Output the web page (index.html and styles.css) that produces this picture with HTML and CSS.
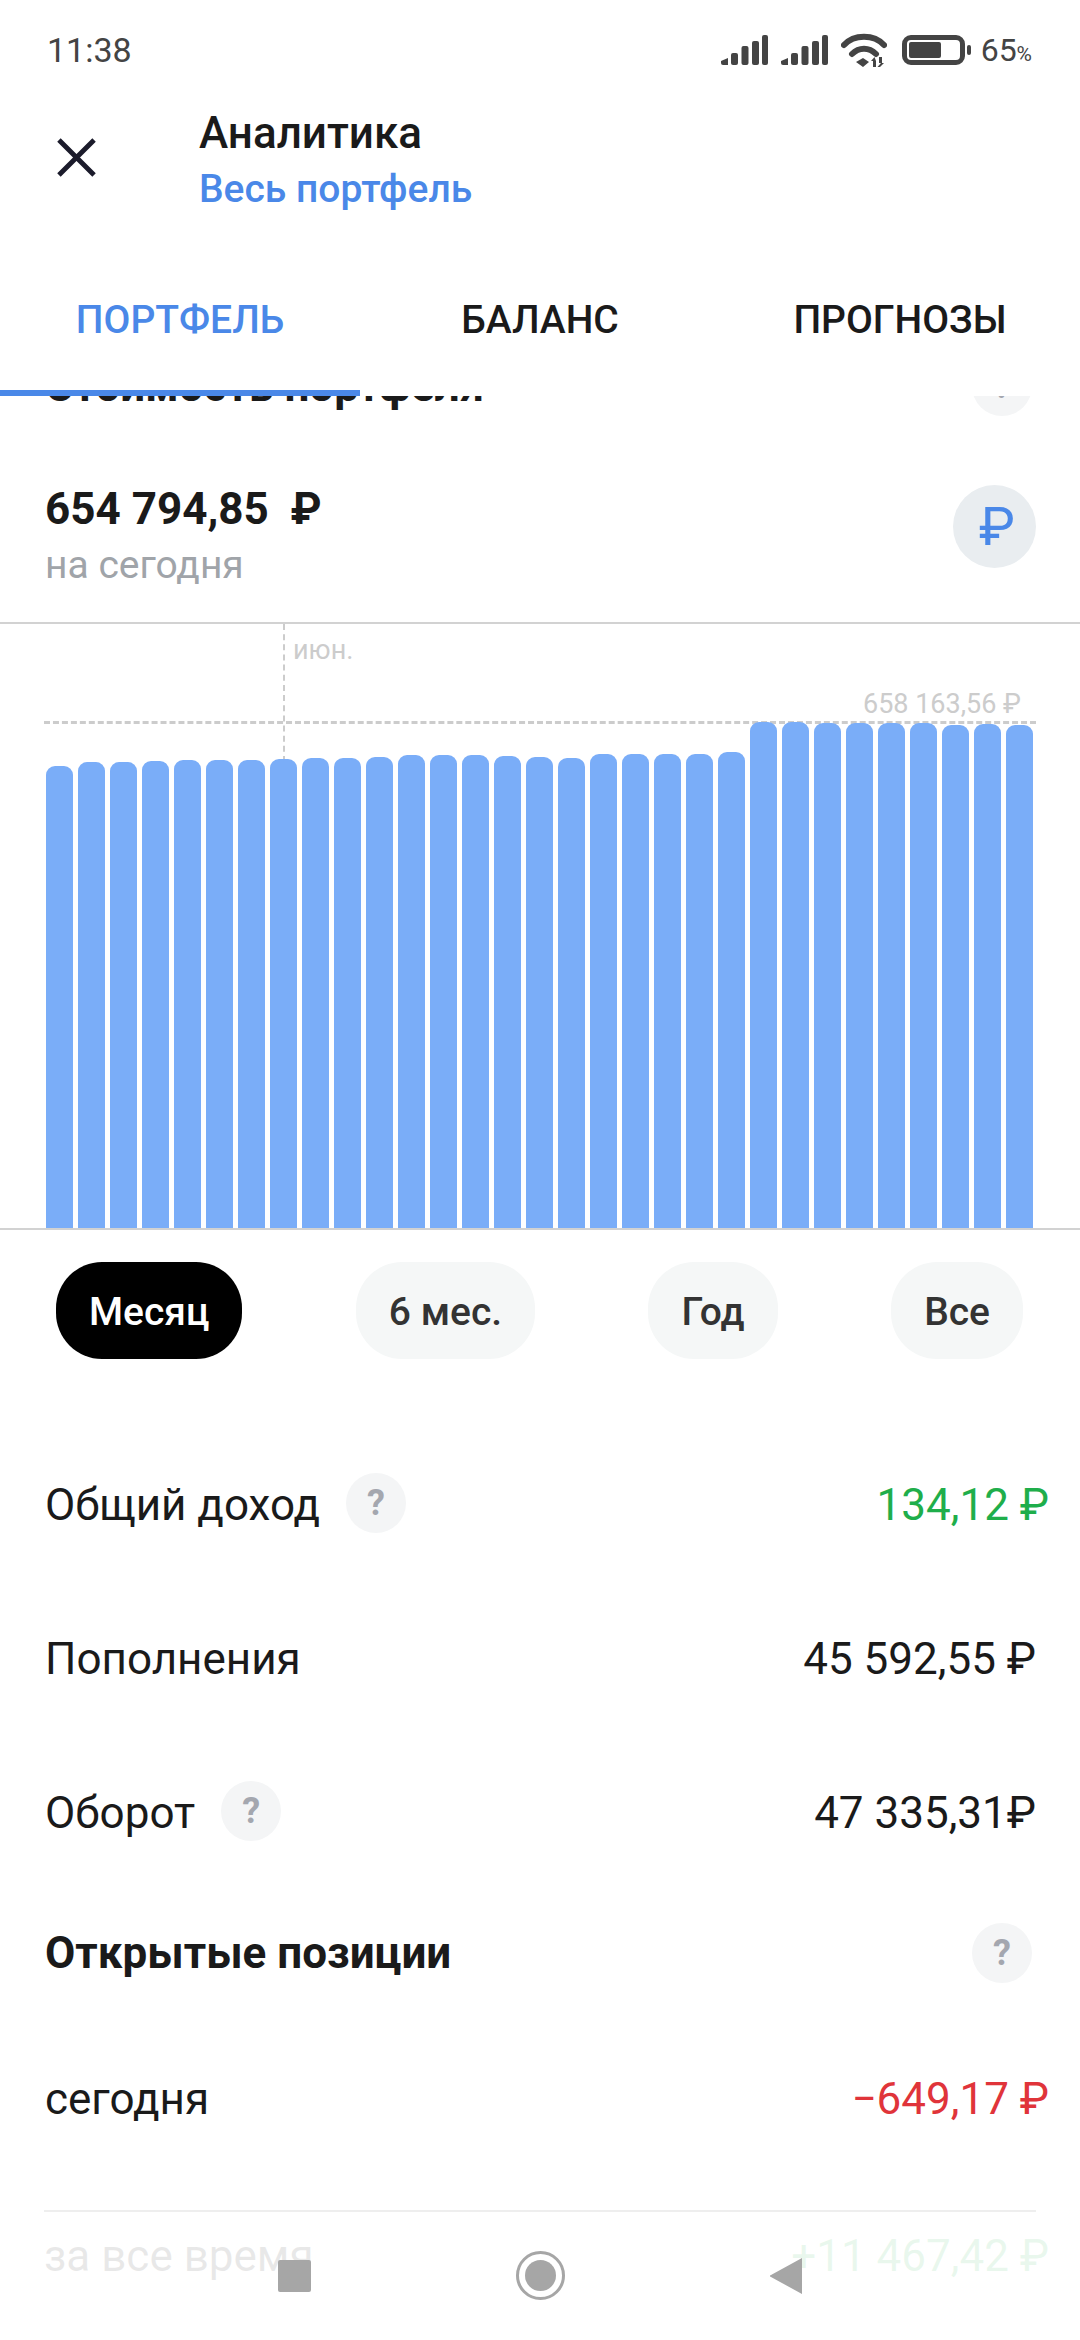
FILE: index.html
```html
<!DOCTYPE html>
<html lang="ru">
<head>
  <meta charset="UTF-8" />
  <meta name="viewport" content="width=device-width, initial-scale=1.0" />
  <title>Аналитика</title>
  <link rel="stylesheet" href="styles.css">
</head>
<body>
  <div class="screen">
    <div class="status">
      <span class="time">11:38</span>
      <div class="status-icons">
        <svg class="signal" viewBox="0 0 47 30" fill="#444"><path d="M0 26l7-3v7H2a2 2 0 0 1-2-2z"/><rect x="10" y="18" width="7" height="12" rx="2"/><rect x="20.500" y="11" width="7" height="19" rx="2"/><rect x="31" y="6" width="7" height="24" rx="2"/><rect x="41" y="0" width="6" height="30" rx="2"/></svg>
        <svg class="signal second" viewBox="0 0 47 30" fill="#444"><path d="M0 26l7-3v7H2a2 2 0 0 1-2-2z"/><rect x="10" y="18" width="7" height="12" rx="2"/><rect x="20.500" y="11" width="7" height="19" rx="2"/><rect x="31" y="6" width="7" height="24" rx="2"/><rect x="41" y="0" width="6" height="30" rx="2"/></svg>
        <svg class="wifi" viewBox="0 0 46 34"><path d="M3 12C13 1 33 1 43 12M11 21c7-7 17-7 24 0" fill="none" stroke="#444" stroke-width="6" stroke-linecap="round"/><path d="M15 29l7-4 6 4-6 5zM32 34v-6h-2l3.500-4 1.500 4v6zM38 24v6h2l-3.500 4h2.500l4-4h-2v-6z" fill="#444"/></svg>
        <div class="battery"><div class="battery-fill"></div></div>
        <div class="battery-nub"></div>
        <span class="percent">65<small>%</small></span>
      </div>
    </div>

    <header class="appbar">
      <svg class="close" viewBox="0 0 40 40"><path d="M2 2l36 36M38 2L2 38" stroke="#1b1b2b" stroke-width="5" fill="none"/></svg>
      <div>
        <h1>Аналитика</h1>
        <p class="sub">Весь портфель</p>
      </div>
    </header>

    <nav class="tabs">
      <div class="tab active">ПОРТФЕЛЬ</div>
      <div class="tab">БАЛАНС</div>
      <div class="tab">ПРОГНОЗЫ</div>
    </nav>

    <main class="content">
      <div class="row-head clipped">
        <h2>Стоимость портфеля</h2>
        <span class="hint">?</span>
      </div>

      <section class="total">
        <div>
          <div class="total-value">654 794,85&nbsp; ₽</div>
          <div class="total-date">на сегодня</div>
        </div>
        <div class="currency">₽</div>
      </section>

      <section class="chart">
        <div class="month-line"></div>
        <span class="month">июн.</span>
        <div class="max-line"></div>
        <span class="max">658 163,56 ₽</span>
        <div class="bars">
          <div class="bar" style="height:462px"></div>
          <div class="bar" style="height:466px"></div>
          <div class="bar" style="height:466px"></div>
          <div class="bar" style="height:467px"></div>
          <div class="bar" style="height:468px"></div>
          <div class="bar" style="height:468px"></div>
          <div class="bar" style="height:468px"></div>
          <div class="bar" style="height:469px"></div>
          <div class="bar" style="height:470px"></div>
          <div class="bar" style="height:470px"></div>
          <div class="bar" style="height:471px"></div>
          <div class="bar" style="height:473px"></div>
          <div class="bar" style="height:473px"></div>
          <div class="bar" style="height:473px"></div>
          <div class="bar" style="height:472px"></div>
          <div class="bar" style="height:471px"></div>
          <div class="bar" style="height:470px"></div>
          <div class="bar" style="height:474px"></div>
          <div class="bar" style="height:474px"></div>
          <div class="bar" style="height:474px"></div>
          <div class="bar" style="height:474px"></div>
          <div class="bar" style="height:476px"></div>
          <div class="bar" style="height:506px"></div>
          <div class="bar" style="height:506px"></div>
          <div class="bar" style="height:505px"></div>
          <div class="bar" style="height:505px"></div>
          <div class="bar" style="height:505px"></div>
          <div class="bar" style="height:505px"></div>
          <div class="bar" style="height:503px"></div>
          <div class="bar" style="height:504px"></div>
          <div class="bar" style="height:503px"></div>
        </div>
      </section>

      <div class="periods">
        <button class="pill selected">Месяц</button>
        <button class="pill">6 мес.</button>
        <button class="pill">Год</button>
        <button class="pill">Все</button>
      </div>

      <div class="rows">
        <div class="row">
          <div class="row-label">Общий доход <span class="hint">?</span></div>
          <div class="amount green">134,12 ₽</div>
        </div>
        <div class="row">
          <div class="row-label">Пополнения</div>
          <div class="amount inset">45 592,55 ₽</div>
        </div>
        <div class="row">
          <div class="row-label">Оборот <span class="hint">?</span></div>
          <div class="amount inset">47 335,31₽</div>
        </div>
        <div class="row-head positions">
          <h2>Открытые позиции</h2>
          <span class="hint">?</span>
        </div>
        <div class="row">
          <div class="row-label">сегодня</div>
          <div class="amount red">−649,17 ₽</div>
        </div>
        <div class="row last">
          <div class="row-label">за все время</div>
          <div class="amount green">+11 467,42 ₽</div>
        </div>
      </div>
    </main>

    <div class="navbar">
      <div class="nav-square"></div>
      <div class="nav-home"><div class="nav-dot"></div></div>
      <svg class="nav-back" viewBox="0 0 32 36"><path d="M32 0v36L1 19a1 1 0 0 1 0-2z" fill="#a6a6a6"/></svg>
    </div>
  </div>
</body>
</html>
```
FILE: styles.css
```css
* {
  margin: 0;
  padding: 0;
  box-sizing: border-box;
}
body {
  background-color: #fff;
  font-family: Roboto, "Noto Sans", sans-serif;
  color: #1a1a1a;
}
.screen {
  position: relative;
  width: 1080px;
  height: 2340px;
  display: flex;
  flex-direction: column;
  overflow: hidden;
}

/* status bar */
.status {
  height: 100px;
  flex: none;
  display: flex;
  justify-content: space-between;
  align-items: center;
  padding: 0 48px 0 47px;
}
.time {
  font-size: 34px;
  color: #444;
}
.status-icons {
  display: flex;
  align-items: center;
}
.signal {
  width: 47px;
  height: 30px;
}
.signal.second {
  margin-left: 13px;
}
.wifi {
  width: 46px;
  height: 34px;
  margin-left: 13px;
}
.battery {
  width: 63px;
  height: 30px;
  margin-left: 15px;
  border: 5px solid #444;
  border-radius: 9px;
  padding: 2px;
}
.battery-fill {
  width: 32px;
  height: 16px;
  background-color: #444;
  border-radius: 2px;
}
.battery-nub {
  width: 4px;
  height: 10px;
  margin-left: 2px;
  background-color: #444;
  border-radius: 2px;
}
.percent {
  margin-left: 10px;
  font-size: 32px;
  color: #444;
}
.percent small {
  font-size: 21px;
}

/* header */
.appbar {
  height: 170px;
  flex: none;
  display: flex;
  align-items: flex-start;
  padding: 8px 0 0 57px;
}
.close {
  width: 39px;
  height: 39px;
  margin: 30px 103px 0 0;
}
h1 {
  font-size: 44px;
  font-weight: 500;
  line-height: 50px;
}
.sub {
  margin-top: 6px;
  font-size: 39px;
  font-weight: 500;
  line-height: 50px;
  color: #4a88e8;
}

.tabs {
  height: 126px;
  flex: none;
  display: flex;
  position: relative;
  z-index: 2;
  background-color: #fff;
}
.tab {
  width: 360px;
  padding-top: 29px;
  font-size: 39px;
  font-weight: 500;
  line-height: 42px;
  text-align: center;
}
.tab.active {
  color: #4a88e8;
  border-bottom: 6px solid #4a88e8;
}

/* scrolled content */
.content {
  flex: 1;
  min-height: 0;
  overflow: hidden;
}
.row-head {
  display: flex;
  justify-content: space-between;
  align-items: center;
  padding: 0 48px 0 45px;
}
.row-head .hint {
  margin: 0;
}
.clipped {
  height: 60px;
  margin-top: -40px;
}
h2 {
  font-size: 44px;
  font-weight: 700;
}
.hint {
  display: inline-flex;
  justify-content: center;
  align-items: center;
  width: 60px;
  height: 60px;
  margin: -4px 0 0 26px;
  border-radius: 50%;
  background-color: #f4f5f6;
  font-size: 36px;
  font-weight: 700;
  color: #a4a7af;
}
.total {
  height: 206px;
  display: flex;
  justify-content: space-between;
  align-items: flex-start;
  padding: 68px 44px 0 45px;
}
.total-value {
  font-size: 44px;
  font-weight: 700;
  line-height: 50px;
}
.total-date {
  margin-top: 9px;
  font-size: 39px;
  line-height: 44px;
  color: #a0a4a9;
}
.currency {
  width: 83px;
  height: 83px;
  margin-top: 1px;
  padding-left: 5px;
  border-radius: 50%;
  background-color: #e9edf0;
  color: #4a88e8;
  font-size: 54px;
  line-height: 83px;
  text-align: center;
}

/* chart */
.chart {
  position: relative;
  height: 608px;
  border-top: 2px solid #d2d2d2;
  border-bottom: 2px solid #d2d2d2;
}
.bars {
  position: relative;
  height: 100%;
  display: flex;
  align-items: flex-end;
  gap: 5px;
  padding-left: 46px;
}
.bar {
  width: 27px;
  flex: none;
  border-radius: 9px 9px 0 0;
  background-color: #7aadf8;
}
.month-line {
  position: absolute;
  left: 283px;
  top: 0;
  height: 138px;
  border-left: 2px dashed #ccc;
}
.max-line {
  position: absolute;
  left: 44px;
  right: 44px;
  top: 97px;
  border-top: 3px dashed #ccc;
}
.month {
  position: absolute;
  left: 293px;
  top: 10px;
  font-size: 27px;
  color: #ccc;
}
.max {
  position: absolute;
  right: 59px;
  top: 64px;
  font-size: 27px;
  color: #ccc;
}

/* period switch */
.periods {
  display: flex;
  justify-content: space-between;
  padding: 32px 57px 0 56px;
}
.pill {
  height: 97px;
  padding: 3px 33px 0;
  border: none;
  border-radius: 46px;
  background-color: #f5f7f7;
  font-family: inherit;
  font-size: 39px;
  font-weight: 500;
  color: #333;
}
.pill.selected {
  background-color: #000;
  color: #fff;
}

/* rows */
.rows {
  padding: 67px 31px 0 45px;
}
.row {
  height: 154px;
  padding-top: 4px;
  display: flex;
  justify-content: space-between;
  align-items: center;
  font-size: 44px;
}
.row-label {
  display: flex;
  align-items: center;
}
.amount.inset {
  margin-right: 13px;
}
.green {
  color: #1fae4b;
}
.red {
  color: #e0343a;
}
.positions {
  height: 130px;
  margin-bottom: 2px;
  padding: 0 17px 0 0;
}
.row.last {
  height: 90px;
  margin: 36px 13px 0 -1px;
  padding-top: 0;
  border-top: 2px solid #eee;
}
.row.last .amount {
  margin-right: -13px;
}

/* system nav over content */
.navbar {
  position: absolute;
  left: 0;
  right: 0;
  bottom: 0;
  height: 113px;
  display: flex;
  justify-content: center;
  align-items: center;
  gap: 205px;
  padding-bottom: 16px;
  background-color: rgba(255, 255, 255, 0.9);
}
.nav-square {
  width: 33px;
  height: 32px;
  border-radius: 2px;
  background-color: #a6a6a6;
}
.nav-home {
  width: 49px;
  height: 49px;
  padding: 6px;
  border: 3px solid #a6a6a6;
  border-radius: 50%;
}
.nav-dot {
  width: 31px;
  height: 31px;
  border-radius: 50%;
  background-color: #a6a6a6;
}
.nav-back {
  width: 32px;
  height: 36px;
}
```
